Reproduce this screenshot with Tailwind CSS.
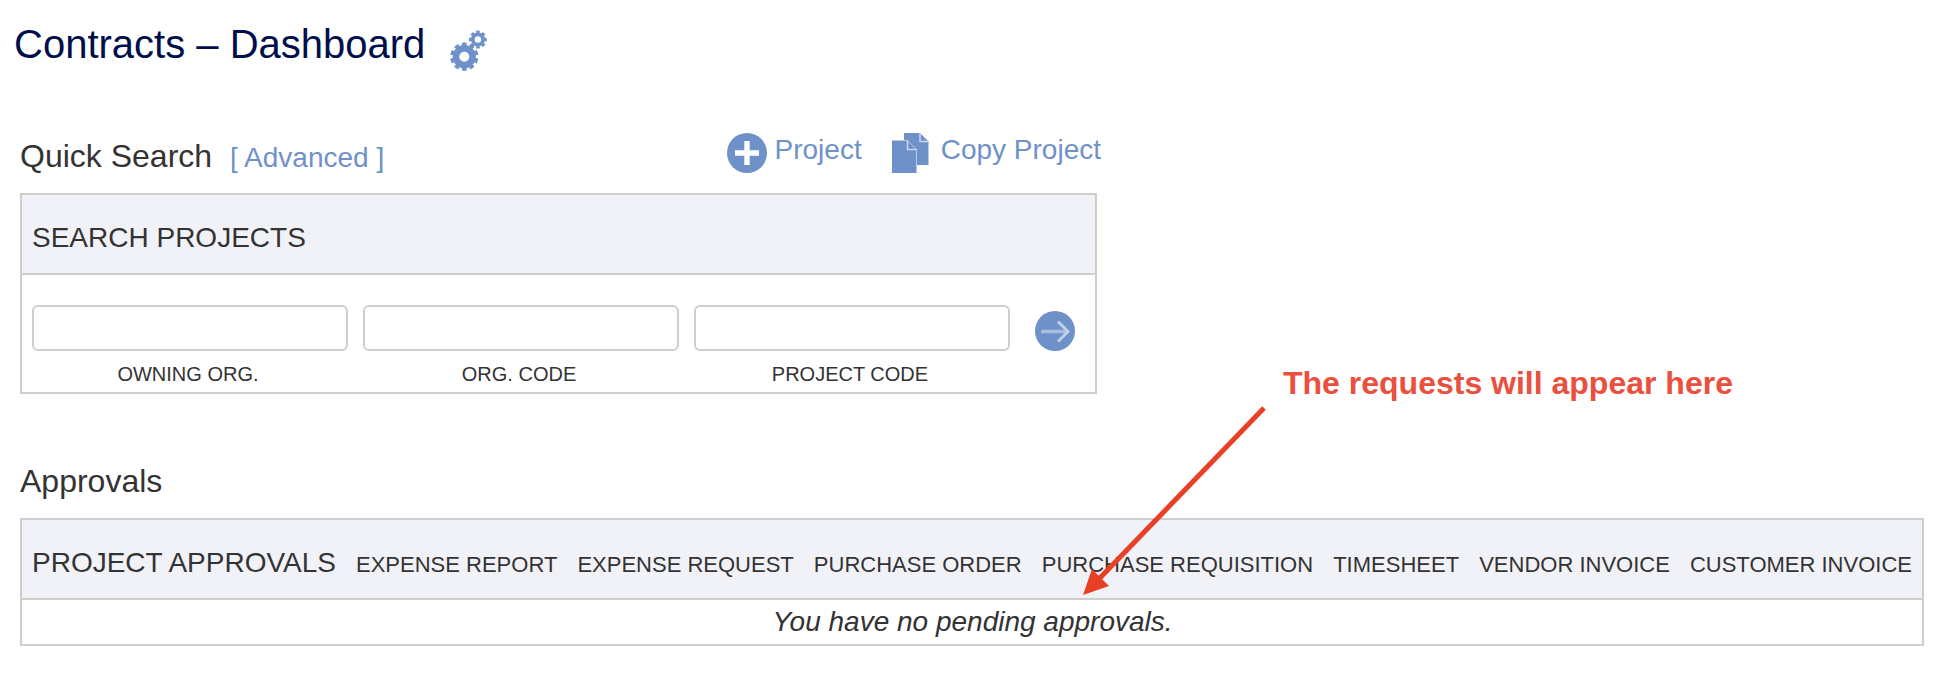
<!DOCTYPE html>
<html lang="en">
<head>
<meta charset="utf-8">
<title>Contracts – Dashboard</title>
<script src="https://cdn.jsdelivr.net/npm/@tailwindcss/browser@4"></script>
</head>
<body class="relative h-[680px] w-[1944px] overflow-hidden bg-white font-['Liberation_Sans',Arial,sans-serif] text-[#333] whitespace-nowrap">
<header class="flex h-[88px] pl-[14px]">
  <h1 class="text-[40px] leading-[88px] text-[#000f4b]">Contracts – Dashboard</h1>
  <svg class="mt-[28px] ml-[21px] h-[46px] w-[44px]" viewBox="446 28 44 46" fill="none" stroke="#6f91ca">
    <circle cx="464.3" cy="56.7" r="8.3" stroke-width="6.6"/>
    <circle cx="464.3" cy="56.7" r="12.4" stroke-width="3.4" pathLength="100" stroke-dasharray="5.8 4.2" stroke-dashoffset="2.9" transform="rotate(90 464.3 56.7)"/>
    <circle cx="477.9" cy="39.5" r="5.1" stroke-width="3.8"/>
    <circle cx="477.9" cy="39.5" r="7.6" stroke-width="2.6" pathLength="80" stroke-dasharray="6 4" stroke-dashoffset="3"/>
  </svg>
</header>
<main class="pl-5">
  <section class="w-[1077px]">
    <div class="flex h-[105px] justify-between">
      <div class="flex items-baseline pt-[48px]">
        <h2 class="text-[32px] leading-10">Quick Search</h2>
        <a class="ml-[18px] text-[28px] leading-10 text-[#6f91ca]">[ Advanced ]</a>
      </div>
      <div class="-mr-[4px] flex pt-[42px] text-[28px] leading-10 text-[#6f91ca]">
        <svg class="mt-[3px] mr-[8px] h-10 w-10" viewBox="0 0 40 40"><circle cx="20" cy="20" r="20" fill="#6f91ca"/><path d="M20 8v24M8 20h24" stroke="#fff" stroke-width="5.4"/></svg>
        <a>Project</a>
        <svg class="mt-[3px] ml-[30px] mr-[12px] h-10 w-[37px]" viewBox="0 0 37 40"><path d="M12 0H28L36.500 8.500V32H12Z" fill="#6f91ca"/><path d="M28 0V8.500H36.500" fill="none" stroke="#c9d6ec" stroke-width="1.500"/><path d="M0 7.500H15.500L24.500 16.500V40H0Z" fill="#6f91ca"/><path d="M12 7.500H15.500L24.500 16.500V32" fill="none" stroke="#b9c9e6" stroke-width="1"/><path d="M15.500 7.500V16.500H24.500" fill="none" stroke="#c9d6ec" stroke-width="1.500"/></svg>
        <a>Copy Project</a>
      </div>
    </div>
    <div class="h-[201px] border-2 border-[#cfcfca]">
      <h3 class="h-20 border-b-2 border-[#cfcfca] bg-[#f1f2f8] pl-[10px] text-[28px] leading-[86px]">SEARCH PROJECTS</h3>
      <div class="flex gap-[15px] pt-[30px] pl-[10px] text-center text-[20px] leading-[46px]">
        <label class="w-[316px]"><input class="block h-[46px] w-full rounded-[6px] border-2 border-[#cfcfca]"><span class="mr-1 block">OWNING ORG.</span></label>
        <label class="w-[316px]"><input class="block h-[46px] w-full rounded-[6px] border-2 border-[#cfcfca]"><span class="mr-1 block">ORG. CODE</span></label>
        <label class="w-[316px]"><input class="block h-[46px] w-full rounded-[6px] border-2 border-[#cfcfca]"><span class="mr-1 block">PROJECT CODE</span></label>
        <svg class="mt-[6px] ml-[10px] h-10 w-10" viewBox="0 0 40 40" fill="none"><circle cx="20" cy="20" r="20" fill="#6f91ca"/><path d="M6 20.500H33" stroke="#a9bde0" stroke-width="3.500"/><path d="M23 10.500L33 20.500L23 30.500" stroke="#c3d1ea" stroke-width="2.800"/></svg>
      </div>
    </div>
  </section>
  <section class="w-[1904px] pt-[67px]">
    <h2 class="h-[57px] text-[32px] leading-10">Approvals</h2>
    <div class="h-32 border-2 border-[#cfcfca]">
      <div class="flex h-20 justify-between border-b-2 border-[#cfcfca] bg-[#f1f2f8] px-[10px] text-[22px] leading-[90px]">
        <h3 class="text-[28px] leading-[86px]">PROJECT APPROVALS</h3>
        <span>EXPENSE REPORT</span><span>EXPENSE REQUEST</span><span>PURCHASE ORDER</span><span>PURCHASE REQUISITION</span><span>TIMESHEET</span><span>VENDOR INVOICE</span><span>CUSTOMER INVOICE</span>
      </div>
      <p class="pl-px text-center text-[28px] leading-[43px] italic">You have no pending approvals.</p>
    </div>
  </section>
</main>
<p class="absolute top-[363px] left-[1283px] text-[32px] leading-10 font-bold text-[#eb4f3e]">The requests will appear here</p>
<svg class="absolute top-[400px] left-[1075px] h-[200px] w-[200px]" viewBox="1075 400 200 200"><path d="M1264 408L1097 581" stroke="#e93f25" stroke-width="5"/><path d="M1083 595L1092 569L1109 586Z" fill="#e93f25"/></svg>
</body>
</html>
